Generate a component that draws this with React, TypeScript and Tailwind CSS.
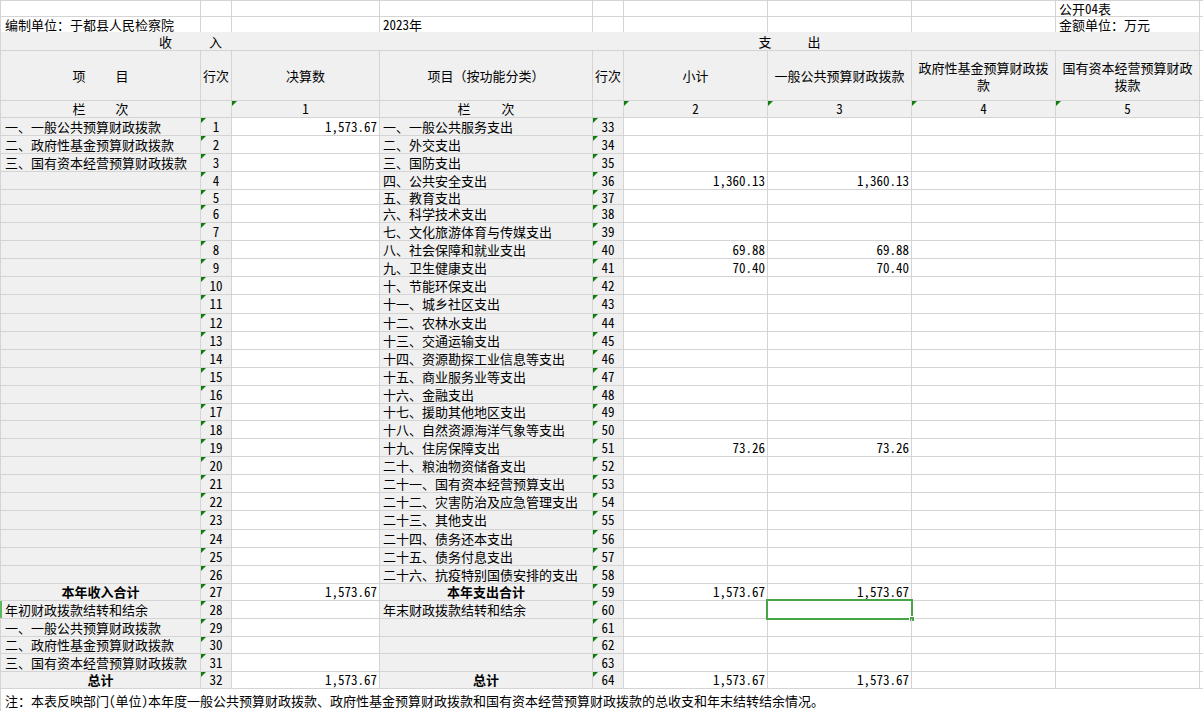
import React from "react";

const COLS = "grid-cols-[200px_31px_148px_213px_31px_144px_144px_144px_144px_3px]";
const H: Record<number, string> = {
  15: "h-[15px] leading-[13px]",
  16: "h-[16px] leading-[14px]",
  17: "h-[17px] leading-[14px]",
  18: "h-[18px] leading-[14px]",
  19: "h-[19px] leading-[14px]",
};
const heights = [18, 18, 18, 18, 15, 18, 18, 18, 18, 18, 19, 18, 18, 18, 18, 18, 17, 18, 18, 18, 18, 18, 19, 18, 18, 18, 17, 18, 18, 17, 18, 17];

const left: string[] = [
  "一、一般公共预算财政拨款",
  "二、政府性基金预算财政拨款",
  "三、国有资本经营预算财政拨款",
  ...Array(23).fill(""),
  "本年收入合计",
  "年初财政拨款结转和结余",
  "一、一般公共预算财政拨款",
  "二、政府性基金预算财政拨款",
  "三、国有资本经营预算财政拨款",
  "总计",
];

const right: string[] = [
  "一、一般公共服务支出",
  "二、外交支出",
  "三、国防支出",
  "四、公共安全支出",
  "五、教育支出",
  "六、科学技术支出",
  "七、文化旅游体育与传媒支出",
  "八、社会保障和就业支出",
  "九、卫生健康支出",
  "十、节能环保支出",
  "十一、城乡社区支出",
  "十二、农林水支出",
  "十三、交通运输支出",
  "十四、资源勘探工业信息等支出",
  "十五、商业服务业等支出",
  "十六、金融支出",
  "十七、援助其他地区支出",
  "十八、自然资源海洋气象等支出",
  "十九、住房保障支出",
  "二十、粮油物资储备支出",
  "二十一、国有资本经营预算支出",
  "二十二、灾害防治及应急管理支出",
  "二十三、其他支出",
  "二十四、债务还本支出",
  "二十五、债务付息支出",
  "二十六、抗疫特别国债安排的支出",
  "本年支出合计",
  "年末财政拨款结转和结余",
  "",
  "",
  "",
  "总计",
];

const c3: Record<number, string> = { 1: "1,573.67", 27: "1,573.67", 32: "1,573.67" };
const c67: Record<number, string> = {
  4: "1,360.13",
  8: "69.88",
  9: "70.40",
  19: "73.26",
  27: "1,573.67",
  32: "1,573.67",
};

const boldRows = new Set([27, 32]);

const B = "border-r border-b border-[#d4d4d4]";

function Tri() {
  return <span className="absolute left-0 top-0 w-[5px] h-[5px] bg-[#0e7d0e] [clip-path:polygon(0_0,100%_0,0_100%)]" />;
}

function Spaced({ a, b, gap }: { a: string; b: string; gap: string }) {
  return (
    <span className={"flex " + gap}>
      <span>{a}</span>
      <span>{b}</span>
    </span>
  );
}

export default function App() {
  return (
    <div className="w-[1203px] h-[711px] overflow-hidden bg-white text-black text-[13px] leading-[15px] font-['Noto_Sans_Mono_CJK_SC','Noto_Sans_CJK_SC',monospace]">
      <div className="border-t border-l border-[#d4d4d4]">
        {/* Row 1 */}
        <div className={"grid " + COLS + " h-[16px] leading-[14px]"}>
          <div className={B} />
          <div className={B} />
          <div className={B} />
          <div className={B} />
          <div className={B} />
          <div className={B} />
          <div className={B} />
          <div className={B} />
          <div className={B + " flex items-center pl-[3px] whitespace-nowrap"}>公开04表</div>
          <div className="border-b border-[#d4d4d4]" />
        </div>
        {/* Row 2 */}
        <div className={"grid " + COLS + " h-[15px] leading-[14px]"}>
          <div className="border-r border-[#d4d4d4] flex items-center pl-[4px] whitespace-nowrap">编制单位：于都县人民检察院</div>
          <div className="border-r border-[#d4d4d4]" />
          <div className="border-r border-[#d4d4d4]" />
          <div className="border-r border-[#d4d4d4] flex items-center pl-[3px]">2023年</div>
          <div className="border-r border-[#d4d4d4]" />
          <div className="border-r border-[#d4d4d4]" />
          <div className="border-r border-[#d4d4d4]" />
          <div className="border-r border-[#d4d4d4]" />
          <div className="border-r border-[#d4d4d4] flex items-center pl-[3px] whitespace-nowrap">金额单位：万元</div>
          <div />
        </div>
        {/* Row 3 */}
        <div className={"grid " + COLS + " h-[19px]"}>
          <div className="col-span-3 bg-[#f0f0f0] border-b border-[#d4d4d4] flex items-center justify-center">
            <Spaced a="收" b="入" gap="gap-[37px]" />
          </div>
          <div className="col-span-6 bg-[#f0f0f0] border-b border-r border-[#d4d4d4] flex items-center justify-center">
            <Spaced a="支" b="出" gap="gap-[36px]" />
          </div>
          <div className="border-b border-[#d4d4d4]" />
        </div>
        {/* Row 4: header */}
        <div className={"grid " + COLS + " h-[50px] leading-[17px]"}>
          <div className={B + " bg-[#f0f0f0] flex items-center justify-center"}>
            <Spaced a="项" b="目" gap="gap-[30px]" />
          </div>
          <div className={B + " bg-[#f0f0f0] flex items-center justify-center whitespace-nowrap"}>行次</div>
          <div className={B + " bg-[#f0f0f0] flex items-center justify-center"}>决算数</div>
          <div className={B + " bg-[#f0f0f0] flex items-center justify-center"}>项目（按功能分类）</div>
          <div className={B + " bg-[#f0f0f0] flex items-center justify-center whitespace-nowrap"}>行次</div>
          <div className={B + " bg-[#f0f0f0] flex items-center justify-center"}>小计</div>
          <div className={B + " bg-[#f0f0f0] flex items-center justify-center whitespace-nowrap"}>一般公共预算财政拨款</div>
          <div className={B + " bg-[#f0f0f0] flex flex-col items-center justify-center"}>
            <span>政府性基金预算财政拨</span>
            <span>款</span>
          </div>
          <div className={B + " bg-[#f0f0f0] flex flex-col items-center justify-center"}>
            <span>国有资本经营预算财政</span>
            <span>拨款</span>
          </div>
          <div className="border-b border-[#d4d4d4]" />
        </div>
        {/* Row 5: 栏次 */}
        <div className={"grid " + COLS + " h-[17px] leading-[14px]"}>
          <div className={B + " bg-[#f0f0f0] flex items-center justify-center"}>
            <Spaced a="栏" b="次" gap="gap-[30px]" />
          </div>
          <div className={B + " bg-[#f0f0f0]"} />
          <div className={B + " bg-[#f0f0f0] relative flex items-center justify-center"}>
            <Tri />1
          </div>
          <div className={B + " bg-[#f0f0f0] flex items-center justify-center"}>
            <Spaced a="栏" b="次" gap="gap-[31px]" />
          </div>
          <div className={B + " bg-[#f0f0f0]"} />
          <div className={B + " bg-[#f0f0f0] relative flex items-center justify-center"}>
            <Tri />2
          </div>
          <div className={B + " bg-[#f0f0f0] relative flex items-center justify-center"}>
            <Tri />3
          </div>
          <div className={B + " bg-[#f0f0f0] relative flex items-center justify-center"}>
            <Tri />4
          </div>
          <div className={B + " bg-[#f0f0f0] relative flex items-center justify-center"}>
            <Tri />5
          </div>
          <div className="border-b border-[#d4d4d4]" />
        </div>
        {/* Data rows */}
        {heights.map((h, i) => {
          const n = i + 1;
          const bold = boldRows.has(n);
          const lt = left[i];
          const rt = right[i];
          return (
            <div key={n} className={"grid " + COLS + " " + H[h]}>
              <div
                className={
                  B +
                  " bg-[#f0f0f0] relative flex items-center whitespace-nowrap " +
                  (bold ? "justify-center font-bold" : "pl-[4px]")
                }
              >
                {n === 28 && <span className="absolute left-[-1px] top-0 bottom-0 w-[2px] bg-[#5cb85c]" />}
                {lt}
              </div>
              <div className={B + " bg-[#f0f0f0] relative flex items-center justify-center"}>
                <Tri />
                {n}
              </div>
              <div className={B + " flex items-center justify-end pr-[2px]"}>{c3[n] || ""}</div>
              <div
                className={
                  B +
                  " bg-[#f0f0f0] flex items-center whitespace-nowrap " +
                  (bold ? "justify-center font-bold" : "pl-[3px]")
                }
              >
                {rt}
              </div>
              <div className={B + " bg-[#f0f0f0] relative flex items-center justify-center"}>
                <Tri />
                {n + 32}
              </div>
              <div className={B + " flex items-center justify-end pr-[2px]"}>{c67[n] || ""}</div>
              <div className={B + " relative flex items-center justify-end pr-[2px]"}>
                {c67[n] || ""}
                {n === 28 && (
                  <>
                    <span className="absolute left-[-2px] top-[-2px] right-[-2px] bottom-[-2px] border-2 border-[#47a447]" />
                    <span className="absolute right-[-4px] bottom-[-4px] w-[6px] h-[6px] bg-[#47a447] border border-white" />
                  </>
                )}
              </div>
              <div className={B} />
              <div className={B} />
              <div className="border-b border-[#d4d4d4]" />
            </div>
          );
        })}
        {/* Footnote */}
        <div className="h-[22px] flex items-center pl-[4px] whitespace-nowrap">
          注：本表反映部门(单位)本年度一般公共预算财政拨款、政府性基金预算财政拨款和国有资本经营预算财政拨款的总收支和年末结转结余情况。
        </div>
      </div>
    </div>
  );
}
